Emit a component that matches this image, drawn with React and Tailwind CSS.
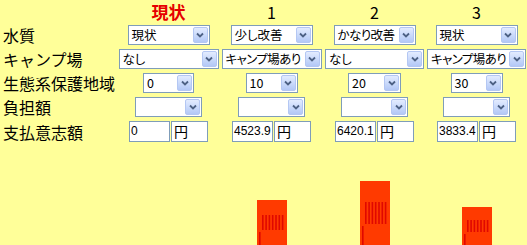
import React from 'react';

const jp = "font-['Noto_Sans_CJK_JP',sans-serif]";

function Combo({ value, className = '', tight = false }) {
  return (
    <div className={`flex h-[20px] items-stretch border border-[#7f9db9] bg-white ${className}`}>
      <span
        className={`min-w-0 flex-1 overflow-hidden whitespace-nowrap pl-[3px] text-[12.5px] leading-[18px] text-black [font-feature-settings:'palt'] ${jp} ${
          tight ? 'tracking-[-0.6px]' : ''
        }`}
      >
        {value}
      </span>
      <span className="m-px flex w-[15px] shrink-0 items-center justify-center rounded-[2px] border border-[#b4c7f3] bg-linear-to-b from-[#e3ecff] to-[#b3c8f6]">
        <svg width="8" height="6" viewBox="0 0 8 6">
          <path d="M1 1.5 L4 4.5 L7 1.5" stroke="#4d6185" strokeWidth="1.8" fill="none" />
        </svg>
      </span>
    </div>
  );
}

function Amount({ value }) {
  return (
    <div className="flex h-[21px]">
      <div className="w-[41px] border border-[#7f9db9] bg-white pl-px text-[12px] leading-[19px] font-['Liberation_Sans',sans-serif]">
        {value}
      </div>
      <div className={`ml-px w-[37px] border border-[#7f9db9] bg-white pl-[2px] text-[14px] leading-[19px] ${jp}`}>
        円
      </div>
    </div>
  );
}

function Bar({ height, band }) {
  const stripes = [0, 1, 2, 3, 4, 5, 6];
  return (
    <svg width="30" height={height} viewBox={`0 0 30 ${height}`} className="block">
      <rect x="0" y="0" width="30" height={height} fill="#ff3a00" />
      {stripes.map((i) => (
        <rect key={i} x={5 + i * 3.3} y={band[0]} width="1.6" height={band[1] - band[0]} fill="#e00800" />
      ))}
      <rect x="2" y={band[1] + 2} width="1.6" height={height} fill="#e00800" />
    </svg>
  );
}

const cell = 'flex items-center justify-center';
const label = `flex items-center pl-[3px] text-[16px] text-black ${jp}`;

export default function App() {
  return (
    <div className="h-[245px] w-[527px] overflow-hidden bg-[#ffff99]">
      <div className="grid grid-cols-[117px_103px_103px_103px_101px] grid-rows-[23px_24px_23px_25px_24px_25px]">
        {/* header */}
        <div />
        <div className={`${cell} pt-[1px] text-[17px] font-bold text-[#e60000] ${jp}`}>現状</div>
        <div className={`${cell} text-[16px] ${jp}`}>1</div>
        <div className={`${cell} text-[16px] ${jp}`}>2</div>
        <div className={`${cell} text-[16px] ${jp}`}>3</div>

        {/* 水質 */}
        <div className={label}>水質</div>
        <div className={cell}><Combo value="現状" className="w-[82px]" /></div>
        <div className={cell}><Combo value="少し改善" className="w-[82px]" /></div>
        <div className={cell}><Combo value="かなり改善" className="w-[82px]" tight /></div>
        <div className={cell}><Combo value="現状" className="w-[82px]" /></div>

        {/* キャンプ場 */}
        <div className={label}>キャンプ場</div>
        <div className={cell}><Combo value="なし" className="w-[100px]" /></div>
        <div className={cell}><Combo value="キャンプ場あり" className="w-[100px]" tight /></div>
        <div className={cell}><Combo value="なし" className="w-[99px]" /></div>
        <div className={cell}><Combo value="キャンプ場あり" className="w-[99px]" tight /></div>

        {/* 生態系保護地域 */}
        <div className={label}>生態系保護地域</div>
        <div className={cell}><Combo value="0" className="w-[51px]" /></div>
        <div className={cell}><Combo value="10" className="w-[52px]" /></div>
        <div className={cell}><Combo value="20" className="w-[53px]" /></div>
        <div className={cell}><Combo value="30" className="w-[52px]" /></div>

        {/* 負担額 */}
        <div className={label}>負担額</div>
        <div className={cell}><Combo value="" className="w-[67px]" /></div>
        <div className={cell}><Combo value="" className="w-[67px]" /></div>
        <div className={cell}><Combo value="" className="w-[67px]" /></div>
        <div className={cell}><Combo value="" className="w-[67px]" /></div>

        {/* 支払意志額 */}
        <div className={label}>支払意志額</div>
        <div className={cell}><Amount value="0" /></div>
        <div className={cell}><Amount value="4523.9" /></div>
        <div className={cell}><Amount value="6420.1" /></div>
        <div className={cell}><Amount value="3833.4" /></div>
      </div>

      {/* chart */}
      <div className="grid h-[101px] grid-cols-[117px_103px_103px_103px_101px] items-end">
        <div />
        <div />
        <div className="flex justify-center"><Bar height={45} band={[15, 30]} /></div>
        <div className="flex justify-center"><Bar height={64} band={[21, 43]} /></div>
        <div className="flex justify-center"><Bar height={38} band={[13, 25]} /></div>
      </div>
    </div>
  );
}
